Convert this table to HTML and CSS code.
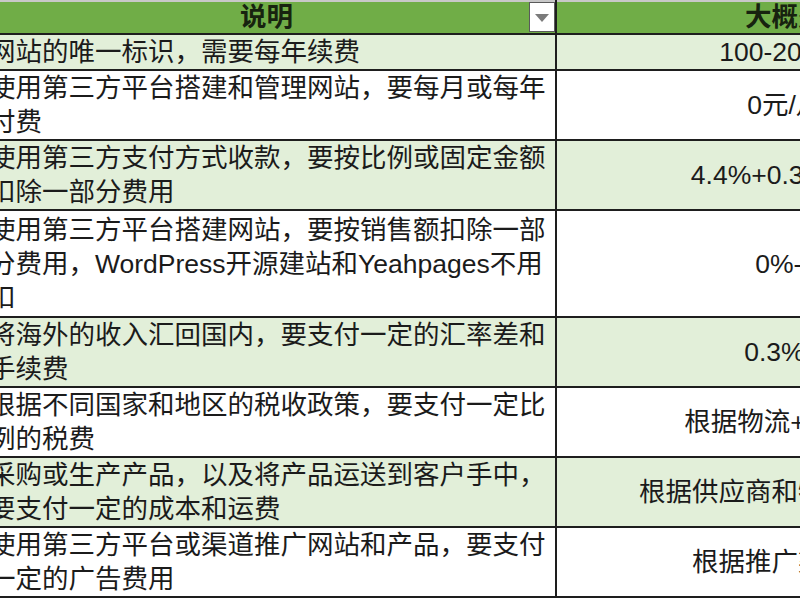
FILE: index.html
```html
<!DOCTYPE html>
<html lang="zh-CN">
<head>
<meta charset="utf-8">
<title>费用说明</title>
<link rel="stylesheet" href="styles.css">
</head>
<body>
<table class="sheet">
  <colgroup><col class="c-desc"><col class="c-cost"></colgroup>
  <thead>
    <tr>
      <th class="h-desc">说明<span class="filter"><span class="tri"></span></span></th>
      <th class="h-cost">大概费用</th>
    </tr>
  </thead>
  <tbody>
    <tr class="alt">
      <td class="desc">网站的唯一标识，需要每年续费</td>
      <td class="cost">100-200元/年</td>
    </tr>
    <tr>
      <td class="desc">使用第三方平台搭建和管理网站，要每月或每年<br>付费</td>
      <td class="cost">0元/月起</td>
    </tr>
    <tr class="alt">
      <td class="desc">使用第三方支付方式收款，要按比例或固定金额<br>扣除一部分费用</td>
      <td class="cost">4.4%+0.30美元/笔</td>
    </tr>
    <tr class="tall">
      <td class="desc">使用第三方平台搭建网站，要按销售额扣除一部<br>分费用，WordPress开源建站和Yeahpages不用<br>扣</td>
      <td class="cost">0%-5%</td>
    </tr>
    <tr class="alt">
      <td class="desc">将海外的收入汇回国内，要支付一定的汇率差和<br>手续费</td>
      <td class="cost">0.3%-1%</td>
    </tr>
    <tr>
      <td class="desc">根据不同国家和地区的税收政策，要支付一定比<br>例的税费</td>
      <td class="cost">根据物流+关税而定</td>
    </tr>
    <tr class="alt">
      <td class="desc">采购或生产产品，以及将产品运送到客户手中，<br>要支付一定的成本和运费</td>
      <td class="cost">根据供应商和物流公司而定</td>
    </tr>
    <tr>
      <td class="desc">使用第三方平台或渠道推广网站和产品，要支付<br>一定的广告费用</td>
      <td class="cost">根据推广渠道而定</td>
    </tr>
  </tbody>
</table>
</body>
</html>
```

FILE: styles.css
```css
html, body {
  margin: 0;
  padding: 0;
  background: #ffffff;
  overflow: hidden;
}

body {
  width: 800px;
  height: 600px;
}

.sheet {
  margin-left: -24px;
  border-collapse: collapse;
  table-layout: fixed;
  width: 1063px;
  font-family: "Liberation Sans", "Noto Sans CJK SC", sans-serif;
  font-size: 26.5px;
  color: #1b1b1b;
}

.c-desc { width: 579px; }
.c-cost { width: 484px; }

.sheet th,
.sheet td {
  border: 2px solid #1e1e1e;
  padding: 0;
  line-height: 34px;
  white-space: nowrap;
  vertical-align: middle;
  overflow: hidden;
}

.sheet th {
  background: #70ad47;
  border-top: 2px solid #c8c8c8;
  font-weight: bold;
  line-height: 31px;
  text-align: center;
  color: #17230f;
}

.h-desc {
  position: relative;
}

.filter {
  position: absolute;
  right: 0;
  top: 0;
  width: 26px;
  height: 30px;
  background: #ffffff;
  border: 1px solid #5a5a5a;
  box-sizing: border-box;
  display: flex;
  align-items: center;
  justify-content: center;
}

.tri {
  width: 0;
  height: 0;
  border-left: 7px solid transparent;
  border-right: 7px solid transparent;
  border-top: 8px solid #7b7b7b;
  margin-top: 2px;
}

.alt td {
  background: #e2efd9;
}

.desc {
  text-align: left;
  padding-left: 11px !important;
}

.cost {
  text-align: center;
}

.tall td {
  padding-top: 2px;
  padding-bottom: 1px;
}
```
